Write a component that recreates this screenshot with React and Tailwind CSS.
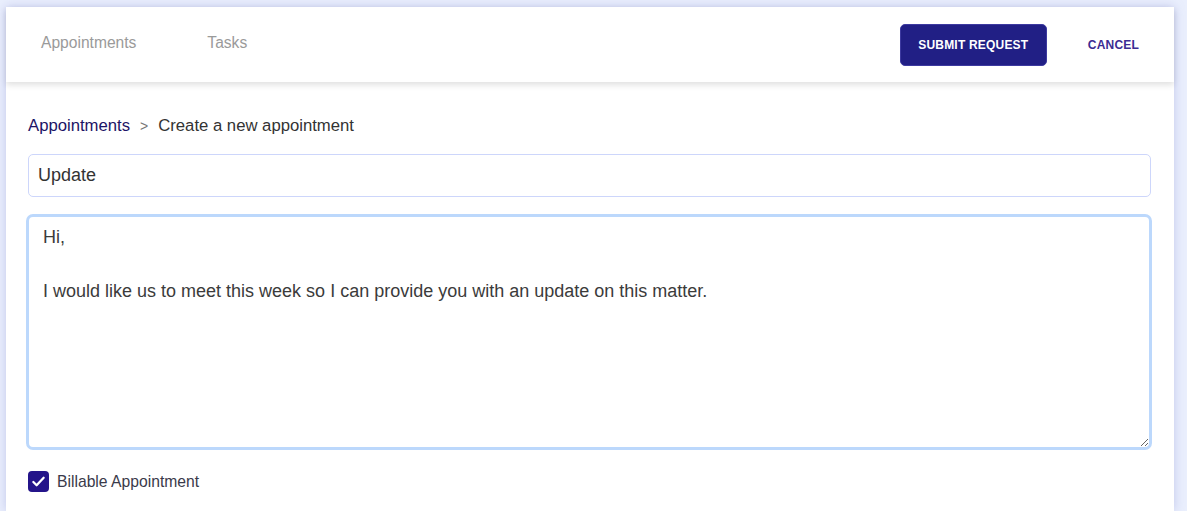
import { useEffect, useRef } from "react";

export default function App() {
  const bodyRef = useRef(null);

  // put the caret at the end of the message, like the screenshot
  useEffect(() => {
    const el = bodyRef.current;
    if (el) {
      el.focus();
      el.setSelectionRange(el.value.length, el.value.length);
    }
  }, []);

  return (
    <div
      className="min-h-screen bg-[#eaeffd] pl-[6px] pr-[13px] pt-[7px] font-['Liberation_Sans',Arial,sans-serif]"
    >
      <div className="bg-white min-h-[504px] shadow-[0_0_10px_rgba(120,125,200,0.35)]">
        {/* top bar */}
        <div className="h-[75px] flex items-center justify-between pl-[35px] pr-[35px] shadow-[0_3px_6px_rgba(0,0,0,0.12)] relative">
          <nav className="flex items-center gap-[71px] text-[15.6px] text-[#9a9a9a] -mt-[3px]">
            <span>Appointments</span>
            <span>Tasks</span>
          </nav>
          <div className="flex items-center gap-[41px]">
            <button className="h-[42px] w-[147px] rounded-[5px] bg-[#211f85] text-white text-[12px] font-bold tracking-[0.2px] border border-[#3d3aa0]">
              SUBMIT REQUEST
            </button>
            <button className="text-[12px] font-semibold text-[#3b2c93] tracking-[0.2px]">
              CANCEL
            </button>
          </div>
        </div>

        {/* form */}
        <div className="pl-[22px] pr-[23px] pt-[34px]">
          <div className="flex items-center gap-[10px] text-[16.7px] leading-[20px] h-[20px]">
            <span className="text-[#1c1466]">Appointments</span>
            <span className="text-[#777] text-[14px]">&gt;</span>
            <span className="text-[#333]">Create a new appointment</span>
          </div>

          <input
            defaultValue="Update"
            className="mt-[18px] block w-full h-[43px] rounded-[5px] border border-[#cdd6fb] px-[9px] text-[18px] text-[#333] outline-none"
          />

          <textarea
            ref={bodyRef}
            defaultValue={"Hi,\n\nI would like us to meet this week so I can provide you with an update on this matter."}
            className="mt-[17px] -ml-[2px] block w-[calc(100%+3px)] h-[236px] rounded-[7px] border-[3px] border-[#bcd8fc] px-[14px] pt-[7px] pb-[7px] text-[18px] leading-[27px] text-[#3b3b3b] outline-none caret-[#222]"
          />

          <label className="mt-[20px] flex items-center gap-[8px] text-[15.7px] text-[#3a3a4a]">
            <span className="w-[21px] h-[21px] rounded-[4px] bg-[#24148a] flex items-center justify-center">
              <svg width="15" height="15" viewBox="0 0 16 16" fill="none">
                <path d="M2.5 8.5l3.5 3.5 7.5-8" stroke="white" strokeWidth="2.4" strokeLinecap="round" strokeLinejoin="round" />
              </svg>
            </span>
            Billable Appointment
          </label>
        </div>
      </div>
    </div>
  );
}
